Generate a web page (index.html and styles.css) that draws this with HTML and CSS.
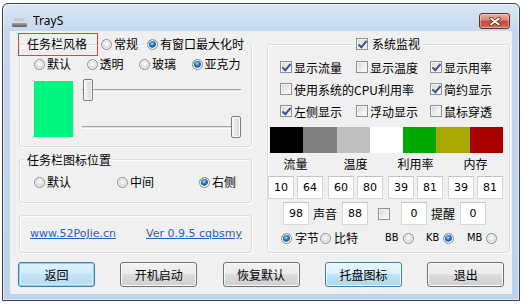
FILE: index.html
```html
<!DOCTYPE html>
<html lang="zh-CN">
<head>
<meta charset="utf-8">
<title>TrayS</title>
<link rel="stylesheet" href="styles.css">
</head>
<body>
<div class="window">
  <div class="titlebar">
    <svg class="appicon" width="16" height="10" viewBox="0 0 16 10">
      <defs><linearGradient id="ig" x1="0" y1="0" x2="0" y2="1"><stop offset="0" stop-color="#a2a2a2"/><stop offset="1" stop-color="#5e5e5e"/></linearGradient></defs>
      <rect x="1.5" y="0" width="11" height="3" rx="1" fill="#cacaca"/>
      <rect x="0" y="5" width="15" height="4" rx="1" fill="url(#ig)"/>
    </svg>
    <span class="title">TrayS</span>
    <div class="close"><svg width="12" height="9" viewBox="0 0 12 9"><path d="M2 1.5 L10 7.5 M10 1.5 L2 7.5" stroke="#5a1f18" stroke-width="3.4" stroke-linecap="round"/><path d="M2 1.5 L10 7.5 M10 1.5 L2 7.5" stroke="#fff" stroke-width="1.8" stroke-linecap="round"/></svg></div>
  </div>
  <div class="client">
    <div class="main">
      <div class="leftcol">
        <div class="group g1">
          <div class="ghead">
            <span class="glabel">任务栏风格</span>
            <span class="radio hr1"><i class="rb"></i>常规</span>
            <span class="radio hr2"><i class="rb on"></i>有窗口最大化时</span>
          </div>
          <div class="mark"></div>
          <div class="styles">
            <span class="radio"><i class="rb"></i>默认</span>
            <span class="radio"><i class="rb"></i>透明</span>
            <span class="radio"><i class="rb"></i>玻璃</span>
            <span class="radio"><i class="rb on"></i>亚克力</span>
          </div>
          <div class="colorarea">
            <div class="preview"></div>
            <div class="sliders">
              <div class="slider"><div class="track"></div><div class="thumb" style="left:1px"></div></div>
              <div class="slider"><div class="track"></div><div class="thumb" style="left:149px"></div></div>
            </div>
          </div>
        </div>
        <div class="group g2">
          <div class="ghead gh2">
            <span class="glabel">任务栏图标位置</span>
          </div>
          <div class="positions">
            <span class="radio"><i class="rb"></i>默认</span>
            <span class="radio"><i class="rb"></i>中间</span>
            <span class="radio"><i class="rb on"></i>右侧</span>
          </div>
        </div>
        <div class="group g3">
          <div class="links">
            <a class="link">www.52PoJie.cn</a>
            <a class="link">Ver 0.9.5 cqbsmy</a>
          </div>
        </div>
      </div>
      <div class="group gr">
        <div class="ghead">
          <span class="glabel rlabel"><i class="cb on"></i>系统监视</span>
        </div>
        <div class="cbrows">
          <span class="check"><i class="cb on"></i>显示流量</span>
          <span class="check"><i class="cb"></i>显示温度</span>
          <span class="check"><i class="cb on"></i>显示用率</span>
          <span class="check wide"><i class="cb"></i>使用系统的CPU利用率</span>
          <span class="check"><i class="cb on"></i>简约显示</span>
          <span class="check"><i class="cb on"></i>左侧显示</span>
          <span class="check"><i class="cb"></i>浮动显示</span>
          <span class="check"><i class="cb"></i>鼠标穿透</span>
        </div>
        <div class="swatches">
          <span class="sw c1"></span><span class="sw c2"></span><span class="sw c3"></span><span class="sw c4"></span><span class="sw c5"></span><span class="sw c6"></span><span class="sw c7"></span>
        </div>
        <div class="heads">
          <span>流量</span><span>温度</span><span>利用率</span><span>内存</span>
        </div>
        <div class="boxes">
          <div class="pair"><span class="edit">10</span><span class="edit">64</span></div>
          <div class="pair"><span class="edit">60</span><span class="edit">80</span></div>
          <div class="pair"><span class="edit">39</span><span class="edit">81</span></div>
          <div class="pair"><span class="edit">39</span><span class="edit">81</span></div>
        </div>
        <div class="boxes2">
          <span class="edit">98</span>
          <span class="lbl">声音</span>
          <span class="edit">88</span>
          <i class="cb mute"></i>
          <span class="edit">0</span>
          <span class="lbl">提醒</span>
          <span class="edit">0</span>
        </div>
        <div class="units">
          <span class="radio u1"><i class="rb on"></i>字节</span>
          <span class="radio u2"><i class="rb"></i>比特</span>
          <span class="radio u3 rev">BB<i class="rb"></i></span>
          <span class="radio u4 rev">KB<i class="rb on"></i></span>
          <span class="radio u5 rev">MB<i class="rb"></i></span>
        </div>
      </div>
    </div>
    <div class="buttons">
      <span class="btn def">返回</span>
      <span class="btn">开机启动</span>
      <span class="btn">恢复默认</span>
      <span class="btn hot">托盘图标</span>
      <span class="btn">退出</span>
    </div>
  </div>
</div>
</body>
</html>
```

FILE: styles.css
```css
* { box-sizing: border-box; }
html, body { margin: 0; padding: 0; background: #fff; }
body {
  width: 524px; height: 307px; overflow: hidden;
  font-family: "Noto Sans CJK SC", "Noto Sans", sans-serif;
  font-size: 12px; color: #000;
}
i { font-style: normal; }

.window {
  margin: 3px 0 0 2px;
  width: 518px; height: 298px;
  border: 1px solid #3a4048;
  border-radius: 6px 6px 0 0;
  background: linear-gradient(#dae7f5, #c4d8ee 28px, #bcd3ec);
  box-shadow: inset 0 0 0 1px rgba(255,255,255,0.55);
  padding: 0 7px 6px;
  display: flex; flex-direction: column;
}

.titlebar { height: 27px; display: flex; align-items: flex-start; flex: none; }
.appicon { margin: 14px 0 0 2px; flex: none; }
.title {
  margin: 9px 0 0 5px;
  font-family: "Noto Sans", sans-serif; font-size: 12px; line-height: 16px; color: #000;
}
.close {
  margin: 9px 2px 0 auto;
  width: 31px; height: 16px;
  border: 1px solid #6a2a22; border-radius: 3px;
  background: linear-gradient(#eab0a3, #d88573 45%, #c4483a 50%, #c85a45 80%, #d77a60);
  box-shadow: inset 0 0 0 1px rgba(255,255,255,0.35);
  display: flex; align-items: center; justify-content: center;
}

.client {
  flex: 1; background: #f0f0f0;
  display: flex; flex-direction: column;
  padding-top: 13px;
}
.main { display: flex; gap: 15px; padding-left: 9px; }
.leftcol { width: 233px; display: flex; flex-direction: column; gap: 12px; }

.group {
  position: relative;
  border: 1px solid #d5dfe5; border-radius: 3px;
  box-shadow: inset 1px 1px 0 #fff, 1px 1px 0 #fff;
}
.g1 { height: 103px; }
.g2 { height: 44px; }
.g3 { height: 38px; }
.gr { width: 243px; height: 209px; }

.ghead { display: flex; height: 18px; line-height: 18px; margin-top: -10px; align-items: center; }
.gh2 { margin-top: -9px; }
.glabel { background: #f0f0f0; margin-left: 5px; padding: 0 2px; display: inline-flex; align-items: center; }

.radio { display: inline-flex; align-items: center; white-space: nowrap; line-height: 18px; }
.rb {
  display: inline-block; flex: none;
  width: 11px; height: 11px; margin-right: 2px;
  border-radius: 50%; border: 1px solid #8e8e8e;
  background: radial-gradient(circle at 50% 45%, #ffffff 0, #ececec 2px, #cbcbcb 5px);
  box-shadow: inset 0 0 0 1px #f6f6f6;
}
.rb.on {
  background: radial-gradient(circle at 45% 40%, #c6ecff 0, #3d94dc 1.6px, #0f4f98 3.4px, #5f86ad 4px, #f2f2f2 4.6px, #d7d7d7 5.5px);
}
.hr1 { background: #f0f0f0; margin-left: 11px; padding: 0 2px 0 1px; }
.hr2 { background: #f0f0f0; margin-left: 6px; padding: 0 2px 0 1px; }

.mark {
  position: absolute; left: -2px; top: -12px;
  width: 80px; height: 23px;
  border: 1px solid #e0413c;
}

.styles { display: grid; grid-template-columns: repeat(4, 52.5px); margin: 2px 0 0 14px; height: 18px; }
.colorarea { display: flex; margin: 6px 0 0 14px; }
.preview { width: 39px; height: 56px; margin-top: 2px; background: #00f57f; }
.sliders { margin-left: 9px; width: 159px; display: flex; flex-direction: column; gap: 15px; }
.slider { position: relative; height: 22px; }
.track {
  margin-top: 10px; height: 3px;
  border-top: 1px solid #a3a3a3; border-bottom: 1px solid #fff;
  background: #e2e2e2;
}
.thumb {
  position: absolute; top: 0;
  width: 10px; height: 22px;
  border: 1px solid #7c7c7c; border-radius: 2px;
  background: linear-gradient(90deg, #f9f9f9, #e6e6e6 50%, #d6d6d6);
  box-shadow: inset 0 0 0 1px #fbfbfb;
}

.positions { display: grid; grid-template-columns: 83px 82px auto; margin: 4px 0 0 14px; height: 18px; }

.links { display: grid; grid-template-columns: 116px auto; padding: 9px 0 0 10px; height: 27px; line-height: 18px; }
.link {
  font-family: "DejaVu Sans", sans-serif; font-size: 11px;
  color: #1f62c0; text-decoration: underline; white-space: nowrap;
}

.rlabel { margin-left: 85px; padding: 0 3px; }
.rlabel .cb { margin-right: 4px; }
.cb {
  display: inline-block; flex: none; position: relative;
  width: 12px; height: 12px; margin-right: 2px;
  border: 1px solid #8e8f8f;
  background: linear-gradient(135deg, #d3d3d3, #f0f0f0 60%, #fdfdfd);
  box-shadow: inset 0 0 0 1px #f5f5f5;
}
.cb.on::after {
  content: ""; position: absolute; left: 3px; top: 0px;
  width: 3px; height: 7px;
  border: solid #3d5290; border-width: 0 2px 2px 0;
  transform: rotate(40deg);
}

.cbrows {
  display: grid; grid-template-columns: 76px 74px auto;
  grid-auto-rows: 22px;
  margin-top: 3px; padding-left: 12px;
}
.check { display: inline-flex; align-items: center; white-space: nowrap; }
.check.wide { grid-column: span 2; }

.swatches { display: grid; grid-template-columns: repeat(7, 1fr); width: 233px; height: 26px; margin: 5px 0 0 2px; }
.c1 { background: #000; }
.c2 { background: #808080; }
.c3 { background: #c0c0c0; }
.c4 { background: #fff; }
.c5 { background: #00a800; }
.c6 { background: #a8a800; }
.c7 { background: #a80000; }

.heads { display: grid; grid-template-columns: repeat(4, 55px); column-gap: 5px; margin-top: 2px; height: 18px; line-height: 18px; text-align: center; }
.boxes { display: grid; grid-template-columns: repeat(4, 55px); column-gap: 5px; margin-top: 3px; }
.pair { display: flex; gap: 3px; }
.edit {
  display: inline-flex; align-items: center; justify-content: center;
  width: 26px; height: 23px; flex: none;
  background: #fff; border: 1px solid #d3d6db; border-top-color: #c0c4ca;
  font-family: "DejaVu Sans", sans-serif; font-size: 11px;
}
.boxes2 { display: flex; align-items: center; margin-top: 3px; padding-left: 15px; height: 23px; }
.lbl { margin: 0 5px 0 4px; line-height: 18px; }
.cb.mute { margin: 0 11px 0 10px; }

.units { display: flex; margin-top: 4px; padding-left: 13px; height: 18px; }
.units .rb { margin-right: 3px; }
.u1 { width: 39px; }
.u2 { width: 65px; }
.rev { font-family: "DejaVu Sans Condensed", "DejaVu Sans", sans-serif; font-size: 11px; }
.units .rev .rb { margin: 0 0 0 4px; }
.u3 { width: 41px; }
.u4 { width: 41px; }

.buttons { display: flex; gap: 25.3px; padding-left: 8px; margin-top: 9px; }
.btn {
  width: 77px; height: 25px;
  display: inline-flex; align-items: center; justify-content: center;
  border: 1px solid #707070; border-radius: 3px;
  background: linear-gradient(#f2f2f2, #ebebeb 50%, #dddddd 50%, #cfcfcf);
  box-shadow: inset 0 0 0 1px #fbfbfb;
}
.btn.def {
  border-color: #3c7fb1;
  background: linear-gradient(#e2f3fc, #cdeaf9 50%, #c1e3f7 50%, #b7ddf4);
  box-shadow: inset 0 0 0 1px #8ed0f3, inset 0 0 0 2px #d8f0fc;
}
.btn.hot {
  border-color: #3c7fb1;
  background: linear-gradient(#eaf6fd, #d9f0fc 50%, #bee6fd 50%, #a7d9f5);
  box-shadow: inset 0 0 0 1px #f4fbff;
}
```
